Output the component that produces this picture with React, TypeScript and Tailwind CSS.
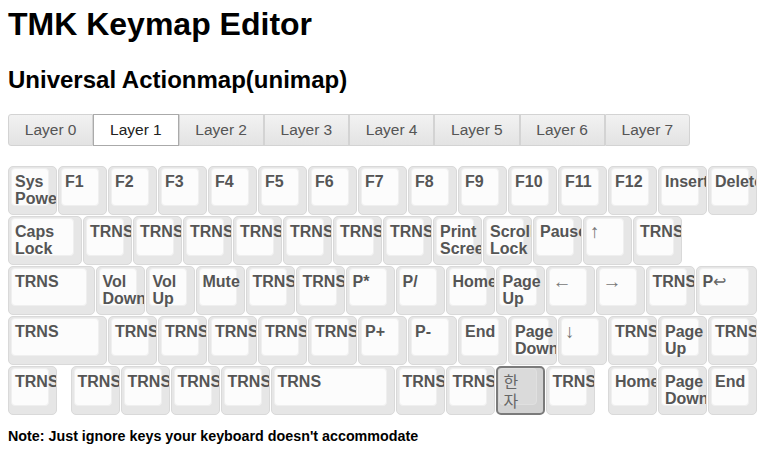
import React from 'react';

type KeyDef = {
  label: string;
  w?: number;
  thin?: boolean;
  selected?: boolean;
  gap?: boolean;
};

const widthClass: Record<string, string> = {
  '0.25': 'w-[12.5px]',
  '1': 'w-[50px]',
  '1.25': 'w-[62.5px]',
  '1.5': 'w-[75px]',
  '1.75': 'w-[87.5px]',
  '2': 'w-[100px]',
  '2.5': 'w-[125px]',
};

const T: KeyDef = { label: 'TRNS' };
const gap: KeyDef = { label: '', w: 0.25, gap: true };

const rows: KeyDef[][] = [
  [
    { label: 'Sys Power' },
    { label: 'F1' }, { label: 'F2' }, { label: 'F3' }, { label: 'F4' },
    { label: 'F5' }, { label: 'F6' }, { label: 'F7' }, { label: 'F8' },
    { label: 'F9' }, { label: 'F10' }, { label: 'F11' }, { label: 'F12' },
    { label: 'Insert' }, { label: 'Delete' },
  ],
  [
    { label: 'Caps Lock', w: 1.5 },
    T, T, T, T, T, T, T,
    { label: 'Print Screen' }, { label: 'Scroll Lock' }, { label: 'Pause' },
    { label: '↑', thin: true }, T,
  ],
  [
    { label: 'TRNS', w: 1.75 },
    { label: 'Vol Down' }, { label: 'Vol Up' }, { label: 'Mute' }, T, T,
    { label: 'P*' }, { label: 'P/' }, { label: 'Home' }, { label: 'Page Up' },
    { label: '←', thin: true }, { label: '→', thin: true }, T,
    { label: 'P↩', w: 1.25 },
  ],
  [
    { label: 'TRNS', w: 2 },
    T, T, T, T, T,
    { label: 'P+' }, { label: 'P-' }, { label: 'End' }, { label: 'Page Down' },
    { label: '↓', thin: true }, T, { label: 'Page Up' }, T,
  ],
  [
    T, gap, T, T, T, T,
    { label: 'TRNS', w: 2.5 },
    T, T, { label: '한자', selected: true }, T, gap,
    { label: 'Home' }, { label: 'Page Down' }, { label: 'End' },
  ],
];

const tabs = ['Layer 0', 'Layer 1', 'Layer 2', 'Layer 3', 'Layer 4', 'Layer 5', 'Layer 6', 'Layer 7'];

const KeyLabel: React.FC<{ k: KeyDef }> = ({ k }) => {
  if (k.selected) {
    return (
      <div className="relative font-['Noto_Sans_CJK_KR',sans-serif] font-normal text-[16px] leading-[19px] text-[#666] -mt-[2px]">
        한<br />자
      </div>
    );
  }
  if (k.label === 'P↩') {
    return (
      <div className="relative">
        P<span className="font-normal text-[#666]">↩</span>
      </div>
    );
  }
  if (k.thin) {
    return <div className="relative text-[19px] font-normal leading-[17px] text-[#777]">{k.label}</div>;
  }
  return <div className="relative">{k.label}</div>;
};

const Key: React.FC<{ k: KeyDef }> = ({ k }) => {
  const w = widthClass[String(k.w ?? 1)];
  if (k.gap) return <div className={`${w} shrink-0`} />;
  return (
    <div className={`${w} shrink-0 h-[50px]`}>
      <div
        className={`relative h-[49px] w-[calc(100%-1px)] overflow-hidden rounded-[5px] pl-[6px] pr-[1px] pt-[6px] text-[16px] font-bold leading-[17px] text-[#555] ${
          k.selected ? 'border-2 border-[#7b7b7b] bg-[#d3d3d3] pl-[5px] pt-[5px]' : 'border border-[#d9d9d9] bg-[#e6e6e6]'
        }`}
      >
        <div
          className={`absolute rounded-[4px] ${
            k.selected
              ? 'left-[1px] top-0 right-[6px] bottom-[8px] bg-[#dadada] border border-[#e0e0e0]'
              : 'left-[2px] top-[1px] right-[7px] bottom-[8px] bg-[#fcfcfc] border border-[#efefef]'
          }`}
        />
        <KeyLabel k={k} />
      </div>
    </div>
  );
};

export default function App() {
  return (
    <div className="min-h-[453px] bg-white px-[8px] font-['Liberation_Sans',Arial,sans-serif] text-black">
      <h1 className="pt-[6px] text-[32px] font-bold leading-[37px]">TMK Keymap Editor</h1>
      <h2 className="mt-[23px] text-[24px] font-bold leading-[28px]">Universal Actionmap(unimap)</h2>

      <div className="mt-[20px] flex">
        {tabs.map((t, i) => (
          <div
            key={t}
            className={`flex h-[32px] w-[85.25px] items-center justify-center border text-[15.5px] ${
              i === 0 ? 'rounded-l-[3px]' : ''
            } ${i === tabs.length - 1 ? 'rounded-r-[3px]' : ''} ${
              i === 1
                ? 'border-[#aaaaaa] bg-white text-[#212121]'
                : 'border-[#d3d3d3] bg-gradient-to-b from-[#f2f2f2] to-[#e3e3e3] text-[#555]'
            }`}
          >
            {t}
          </div>
        ))}
      </div>

      <div className="mt-[20px] flex flex-col">
        {rows.map((row, ri) => (
          <div key={ri} className="flex h-[50px]">
            {row.map((k, ki) => (
              <Key key={ki} k={k} />
            ))}
          </div>
        ))}
      </div>

      <p className="mt-[12px] text-[14.3px] font-bold leading-[16px]">
        Note: Just ignore keys your keyboard doesn't accommodate
      </p>
    </div>
  );
}
